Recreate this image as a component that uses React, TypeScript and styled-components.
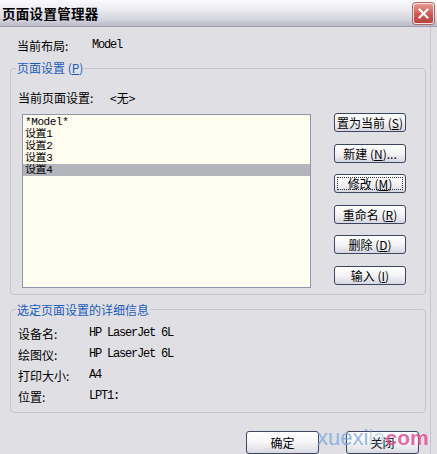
import React from 'react'
import styled, { createGlobalStyle } from 'styled-components'

const GlobalStyle = createGlobalStyle`
  html, body {
    margin: 0;
    padding: 0;
    background: #e0dfe3;
  }
  body {
    font-family: "Liberation Sans", "Noto Sans CJK SC", sans-serif;
    font-size: 12px;
    color: #000;
  }
`

const settings = ['*Model*', '设置1', '设置2', '设置3', '设置4']
const selected = 4

const actions = [
  { label: '置为当前', key: 'S' },
  { label: '新建', key: 'N', tail: '...' },
  { label: '修改', key: 'M', focused: true },
  { label: '重命名', key: 'R' },
  { label: '删除', key: 'D' },
  { label: '输入', key: 'I' }
]

const details = [
  ['设备名:', 'HP LaserJet 6L'],
  ['绘图仪:', 'HP LaserJet 6L'],
  ['打印大小:', 'A4'],
  ['位置:', 'LPT1:']
]

export default function App () {
  return (
    <>
      <GlobalStyle />
      <Window>
        <TitleBar>
          <Title>页面设置管理器</Title>
          <CloseButton aria-label='关闭'>
            <svg width='11' height='11' viewBox='0 0 11 11'>
              <path d='M1.5 1.5 L9.5 9.5 M9.5 1.5 L1.5 9.5' stroke='#fff' strokeWidth='2.2' strokeLinecap='round' />
            </svg>
          </CloseButton>
        </TitleBar>

        <Body>
          <InfoRow>
            <Label $width={75}>当前布局:</Label>
            <Mono>Model</Mono>
          </InfoRow>

          <Group $height={237}>
            <Legend>页面设置 (<u>P</u>)</Legend>
            <CurrentRow>
              <Label $width={92}>当前页面设置:</Label>
              <span>&lt;无&gt;</span>
            </CurrentRow>
            <ListArea>
              <SettingsList>
                {settings.map((s, i) => (
                  <ListItem key={s} $active={i === selected}>{s}</ListItem>
                ))}
              </SettingsList>
              <ActionColumn>
                {actions.map(a => (
                  <ActionButton key={a.key} $focused={a.focused}>
                    {a.label} (<u>{a.key}</u>){a.tail}
                  </ActionButton>
                ))}
              </ActionColumn>
            </ListArea>
          </Group>

          <Group $height={112} $gap={8}>
            <Legend>选定页面设置的详细信息</Legend>
            <DetailList>
              {details.map(([k, v]) => (
                <DetailRow key={k}>
                  <Label $width={71}>{k}</Label>
                  <Mono>{v}</Mono>
                </DetailRow>
              ))}
            </DetailList>
          </Group>

          <Footer>
            <DialogButton>确定</DialogButton>
            <DialogButton>关闭</DialogButton>
          </Footer>
        </Body>

        <Watermark>xuexi<span>la</span><em>com</em></Watermark>
      </Window>
    </>
  )
}

const Window = styled.div`
  position: relative;
  width: 437px;
  height: 454px;
  overflow: hidden;
  background: #e0dfe3;
`

const TitleBar = styled.div`
  height: 26px;
  display: flex;
  align-items: center;
  justify-content: space-between;
  padding: 0 3px 0 2px;
  background: linear-gradient(#fbfbfd 0%, #ececf2 35%, #d4d4de 75%, #babac8 100%);
  border-bottom: 1px solid #9c9cac;
`

const Title = styled.div`
  font-family: "Noto Sans CJK SC", sans-serif;
  font-weight: 700;
  font-size: 13.5px;
  letter-spacing: 0.3px;
  color: #000;
`

const CloseButton = styled.div`
  width: 19px;
  height: 19px;
  display: flex;
  align-items: center;
  justify-content: center;
  border: 1px solid #f4e0e0;
  border-radius: 3px;
  background: linear-gradient(#e89a90, #cc5a52 55%, #b8443e);
  box-shadow: 0 0 0 1px #b06868;
`

const Body = styled.div`
  height: 427px;
  box-sizing: border-box;
  padding: 0 10px;
  display: flex;
  flex-direction: column;
  border-right: 1px solid #c8c8d0;
  width: 431px;
`

const InfoRow = styled.div`
  display: flex;
  align-items: center;
  height: 14px;
  margin-top: 11px;
  padding-left: 7px;
`

const Label = styled.span<{ $width: number }>`
  width: ${p => p.$width}px;
  flex-shrink: 0;
  font-family: "Noto Sans CJK SC", sans-serif;
  font-size: 12px;
`

const Mono = styled.span`
  font-family: "Liberation Mono", monospace;
  font-size: 12px;
  letter-spacing: -1.2px;
`

const Group = styled.fieldset<{ $height: number, $gap?: number }>`
  margin: ${p => p.$gap ?? 9}px 0 0;
  padding: 0;
  width: 416px;
  height: ${p => p.$height}px;
  box-sizing: border-box;
  border: 1px solid #c4c4cc;
  border-radius: 4px;
  min-width: 0;
`

const Legend = styled.legend`
  margin-left: 5px;
  padding: 0 1px;
  height: 14px;
  line-height: 14px;
  font-family: "Noto Sans CJK SC", sans-serif;
  font-size: 12px;
  color: #1a5cc0;
`

const CurrentRow = styled.div`
  display: flex;
  align-items: center;
  height: 14px;
  margin-top: 15px;
  padding-left: 7px;
  font-family: "Noto Sans CJK SC", sans-serif;
`

const ListArea = styled.div`
  display: flex;
  align-items: flex-start;
  margin-top: 10px;
  padding-left: 11px;
`

const SettingsList = styled.div`
  width: 289px;
  height: 174px;
  box-sizing: border-box;
  border: 1px solid #8e96aa;
  background: #fffcf0;
  padding-top: 1px;
`

const ListItem = styled.div<{ $active: boolean }>`
  height: 12px;
  line-height: 12px;
  padding-left: 2px;
  overflow: hidden;
  font-family: "Liberation Mono", "Noto Sans CJK SC", monospace;
  font-size: 11px;
  letter-spacing: -0.4px;
  background: ${p => (p.$active ? '#b4b4bc' : 'transparent')};
`

const ActionColumn = styled.div`
  display: flex;
  flex-direction: column;
  gap: 11.5px;
  margin-left: 23px;
  margin-top: -1px;
`

const ActionButton = styled.button<{ $focused?: boolean }>`
  width: 72px;
  height: 19px;
  padding: 0;
  border: 1px solid #3c4660;
  border-radius: 3px;
  background: linear-gradient(#ffffff 0%, #f4f4f6 50%, #d6d6e0 100%);
  font-family: "Noto Sans CJK SC", sans-serif;
  font-size: 12px;
  line-height: 17px;
  white-space: nowrap;
  color: #000;
  outline: ${p => (p.$focused ? '1px dotted #333' : 'none')};
  outline-offset: -4px;
`

const DetailList = styled.div`
  display: flex;
  flex-direction: column;
  margin-top: 6px;
  padding-left: 7px;
`

const DetailRow = styled.div`
  display: flex;
  align-items: center;
  height: 21px;
`

const Footer = styled.div`
  display: flex;
  justify-content: flex-end;
  gap: 27px;
  margin-top: 18px;
  padding-right: 1px;
`

const DialogButton = styled.button`
  width: 73px;
  height: 23px;
  padding: 0 0 1px;
  border: 1px solid #3c4660;
  border-radius: 3px;
  background: linear-gradient(#ffffff 0%, #f6f6f8 50%, #d8d8e2 100%);
  font-family: "Noto Sans CJK SC", sans-serif;
  font-size: 12px;
  color: #000;
`

const Watermark = styled.div`
  position: absolute;
  left: 317px;
  top: 425px;
  font-family: "Liberation Sans", sans-serif;
  font-size: 22px;
  color: rgba(120, 170, 225, 0.8);
  pointer-events: none;

  span {
    color: rgba(120, 170, 225, 0.4);
  }

  em {
    font-style: normal;
    font-weight: 700;
    font-size: 21px;
    color: rgba(226, 80, 150, 0.85);
  }
`
